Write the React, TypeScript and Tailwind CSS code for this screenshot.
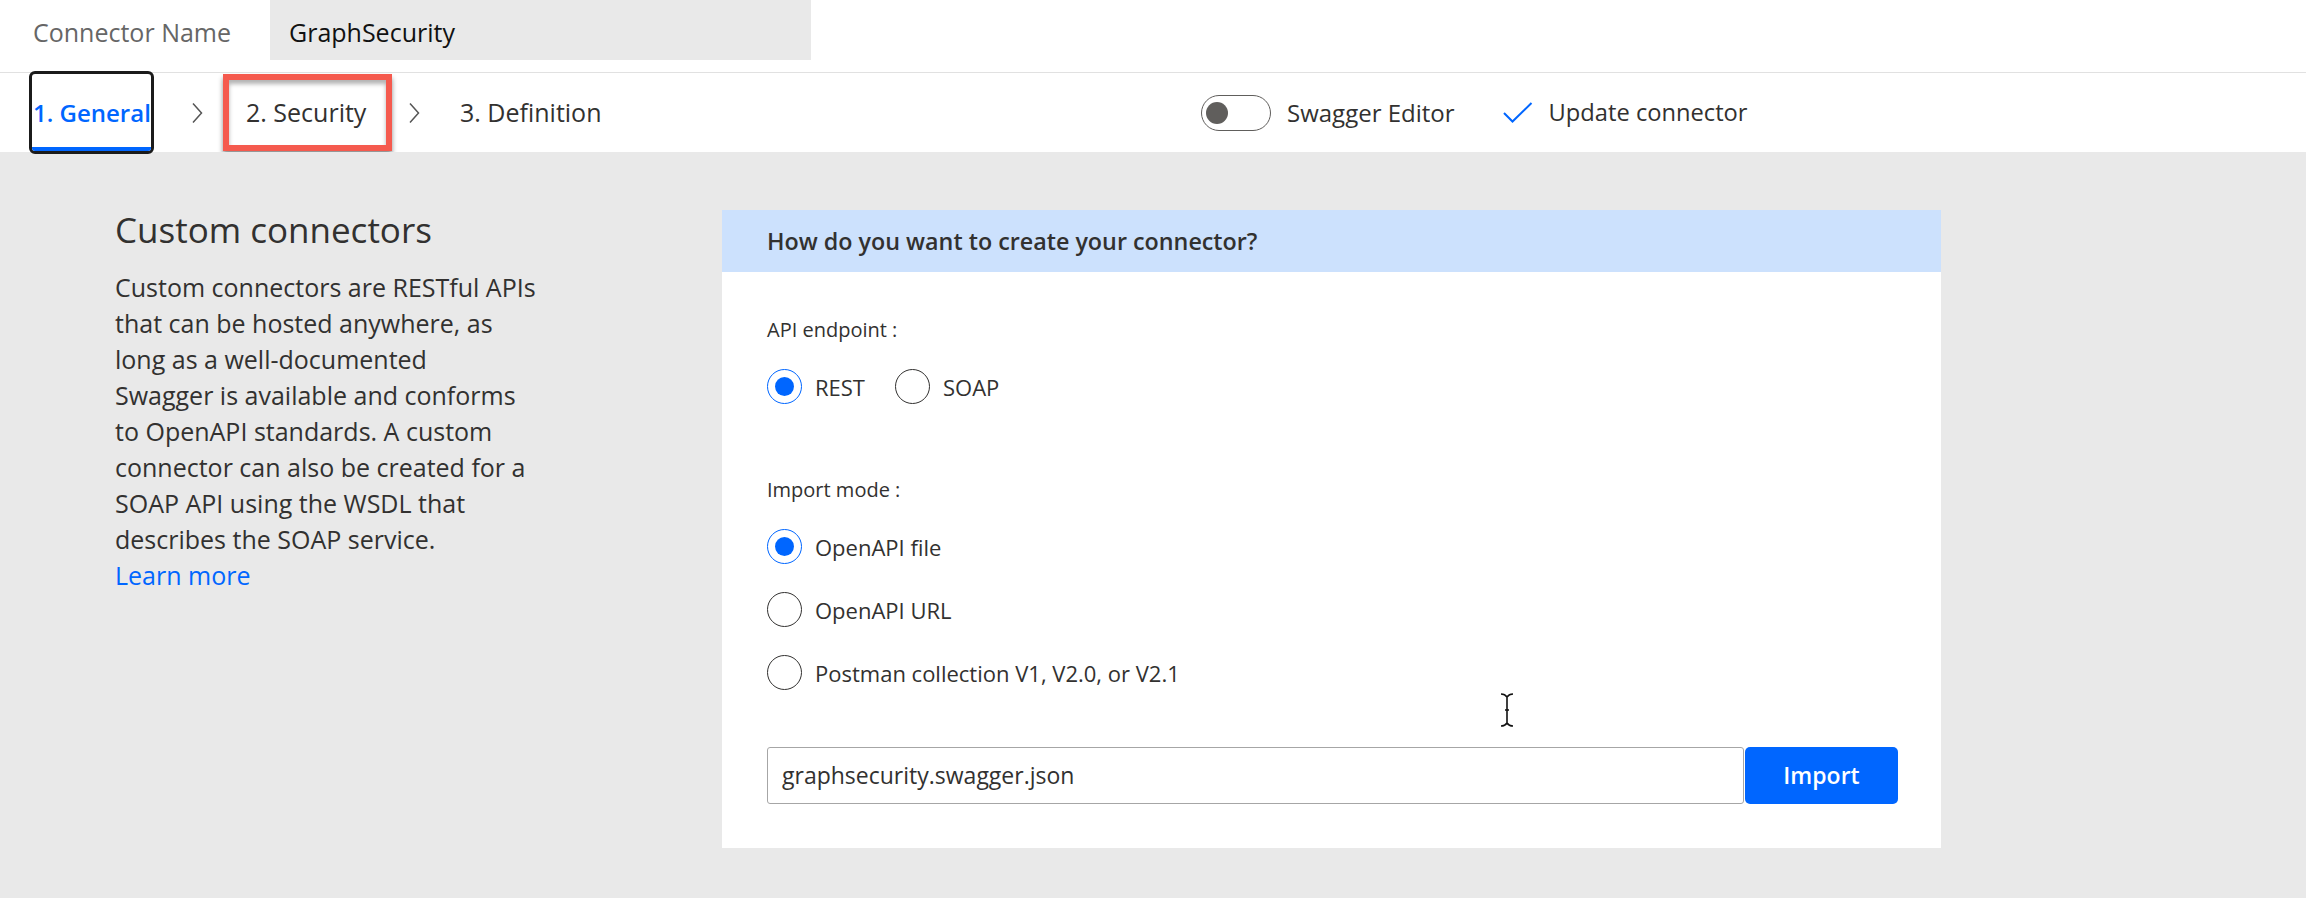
import React from "react";

function Chevron() {
  return (
    <svg width="12" height="22" viewBox="0 0 12 22" className="shrink-0">
      <path d="M2 1.5 L10.5 11 L2 20.5" fill="none" stroke="#555" strokeWidth="1.5" />
    </svg>
  );
}

function Radio({ checked, label }: { checked?: boolean; label: string }) {
  return (
    <div className="flex h-[35px] items-center">
      <div
        className={
          checked
            ? "flex h-[35px] w-[35px] items-center justify-center rounded-full border-[1.5px] border-[#0066ff]"
            : "h-[35px] w-[35px] rounded-full border-[1.5px] border-[#323130]"
        }
      >
        {checked && <div className="h-[19px] w-[19px] rounded-full bg-[#0066ff]" />}
      </div>
      <span className="ml-[13px] text-[22px] leading-[30px] text-[#323130]">{label}</span>
    </div>
  );
}

export default function App() {
  return (
    <div className="flex h-[898px] w-full flex-col bg-white font-['Open_Sans',sans-serif] text-[#323130]">
      {/* connector name bar */}
      <div className="flex h-[73px] shrink-0 border-b border-[#e1e1e1]">
        <div className="flex h-[60px] w-[270px] items-center pl-[33px] pt-[6px] text-[25px] text-[#666666]">
          Connector Name
        </div>
        <div className="flex h-[60px] w-[541px] items-center bg-[#e9e9e9] pl-[19px] pt-[6px] text-[25px] text-[#111]">
          GraphSecurity
        </div>
      </div>

      {/* steps */}
      <div className="flex h-[79px] shrink-0 items-center">
        <div className="flex w-[1201px] shrink-0 items-center">
          <div className="relative ml-[29px] flex h-[83px] w-[125px] shrink-0 items-center overflow-hidden rounded-[6px] border-[3px] border-[#1b1b1b] px-[1px] text-[24px] font-semibold text-[#0066ff]">
            <span className="whitespace-nowrap">1. General</span>
            <div className="absolute bottom-0 left-0 right-0 h-[4px] bg-[#0066ff]" />
          </div>
          <div className="ml-[37px]">
            <Chevron />
          </div>
          <div className="ml-[20px] flex h-[77px] w-[169px] shrink-0 items-center border-[6px] border-[#f55a4e] pl-[17px] text-[25px] shadow-[0_4px_5px_rgba(0,0,0,0.45),inset_0_4px_4px_rgba(0,0,0,0.3)]">
            <span className="whitespace-nowrap">2. Security</span>
          </div>
          <div className="ml-[16px]">
            <Chevron />
          </div>
          <span className="ml-[40px] whitespace-nowrap text-[25px]">3. Definition</span>
        </div>
        <div className="flex h-[36px] w-[70px] shrink-0 items-center rounded-full border-[1.5px] border-[#605e5c] pl-[4px]">
          <div className="h-[22px] w-[22px] rounded-full bg-[#605e5c]" />
        </div>
        <span className="ml-[16px] whitespace-nowrap text-[24px]">Swagger Editor</span>
        <svg width="30" height="22" viewBox="0 0 30 22" className="ml-[48px] shrink-0">
          <path d="M1 11 L9.5 19.5 L28.5 1" fill="none" stroke="#0066ff" strokeWidth="2" />
        </svg>
        <span className="ml-[16px] whitespace-nowrap text-[23.7px]">Update connector</span>
      </div>

      {/* main */}
      <div className="flex flex-1 items-start bg-[#e9e9e9] pt-[58px]">
        <div className="-mt-[2px] w-[722px] shrink-0 pl-[115px]">
          <h1 className="text-[35px] font-normal leading-[44px]">Custom connectors</h1>
          <p className="mt-[17px] whitespace-nowrap text-[25px] leading-[36px]">
            Custom connectors are RESTful APIs
            <br />
            that can be hosted anywhere, as
            <br />
            long as a well-documented
            <br />
            Swagger is available and conforms
            <br />
            to OpenAPI standards. A custom
            <br />
            connector can also be created for a
            <br />
            SOAP API using the WSDL that
            <br />
            describes the SOAP service.
            <br />
            <a href="#" className="text-[#0066ff]">
              Learn more
            </a>
          </p>
        </div>

        <div className="relative w-[1219px] shrink-0 bg-white">
          <div className="flex h-[62px] items-center bg-[#cce1fd] pl-[45px] text-[23.3px] font-semibold">
            How do you want to create your connector?
          </div>
          <div className="pb-[44px] pl-[45px]">
            <div className="mt-[44px] text-[20px] leading-[28px]">API endpoint :</div>
            <div className="mt-[25px] flex items-center">
              <Radio checked label="REST" />
              <div className="ml-[30px]">
                <Radio label="SOAP" />
              </div>
            </div>
            <div className="mt-[72px] text-[20px] leading-[28px]">Import mode :</div>
            <div className="mt-[25px] flex flex-col gap-[28px]">
              <Radio checked label="OpenAPI file" />
              <Radio label="OpenAPI URL" />
              <Radio label="Postman collection V1, V2.0, or V2.1" />
            </div>
            <div className="mt-[57px] flex h-[57px] items-stretch">
              <div className="flex w-[977px] items-center rounded-[3px] border border-[#a6a6a6] pl-[14px] text-[23px]">
                graphsecurity.swagger.json
              </div>
              <button className="ml-[1px] w-[153px] rounded-[5px] bg-[#0066ff] text-[23px] font-semibold text-white">
                Import
              </button>
            </div>
          </div>
          {/* mouse cursor */}
          <svg width="16" height="36" viewBox="0 0 16 36" className="absolute left-[777px] top-[482px]">
            <path
              d="M2 2 Q6 2 8 5 Q10 2 14 2 M8 5 V31 M2 34 Q6 34 8 31 Q10 34 14 34 M6 18 H10"
              fill="none"
              stroke="#111"
              strokeWidth="1.6"
            />
          </svg>
        </div>
      </div>
    </div>
  );
}
